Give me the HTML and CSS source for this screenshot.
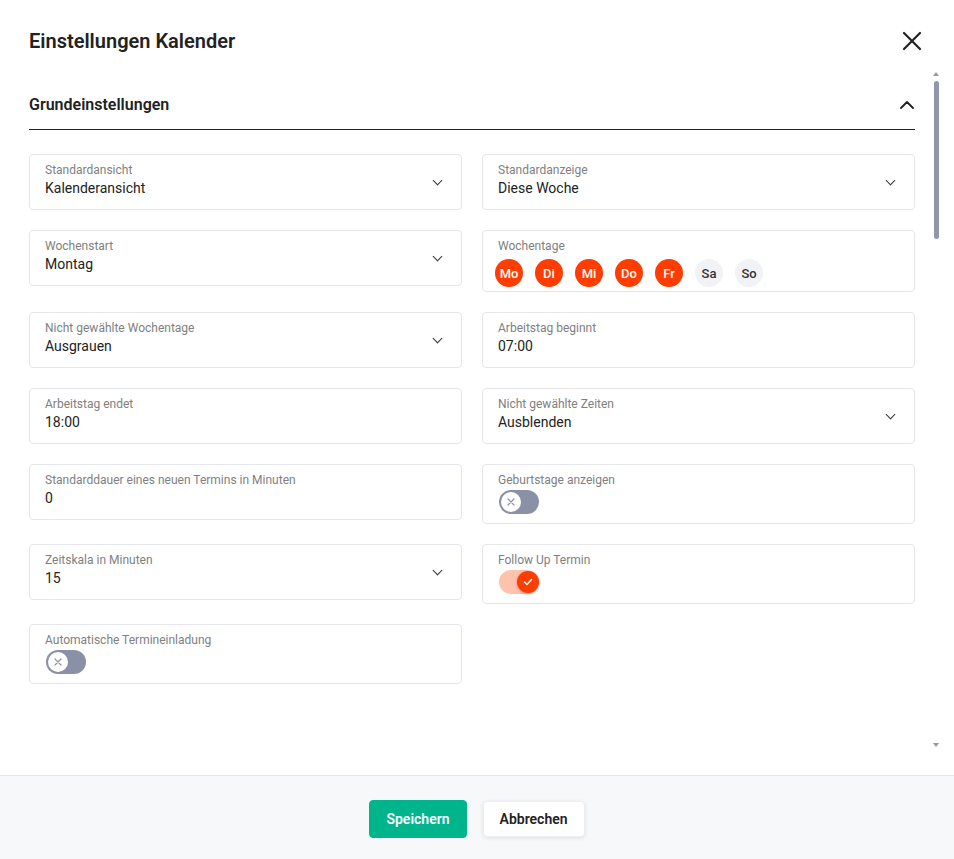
FILE: index.html
```html
<!DOCTYPE html>
<html lang="de">
<head>
  <meta charset="UTF-8">
  <title>Einstellungen Kalender</title>
  <link rel="stylesheet" href="styles.css">
</head>
<body>
  <div class="modal">
    <div class="modal-header">
      <h1>Einstellungen Kalender</h1>
      <button class="close" aria-label="Schließen">
        <svg width="20" height="20" viewBox="0 0 20 20"><path d="M2 2L18 18M18 2L2 18" stroke="#222" stroke-width="2.2" stroke-linecap="round"/></svg>
      </button>
    </div>

    <div class="body-wrap">
      <div class="modal-body">
        <div class="section-head">
          <h2>Grundeinstellungen</h2>
          <svg width="14" height="8" viewBox="0 0 14 8"><path d="M1 7L7 1L13 7" fill="none" stroke="#222" stroke-width="1.8" stroke-linecap="round" stroke-linejoin="round"/></svg>
        </div>

        <div class="form-grid">
          <div class="field select">
            <div class="label">Standardansicht</div>
            <div class="value">Kalenderansicht</div>
          </div>
          <div class="field select">
            <div class="label">Standardanzeige</div>
            <div class="value">Diese Woche</div>
          </div>

          <div class="field select">
            <div class="label">Wochenstart</div>
            <div class="value">Montag</div>
          </div>
          <div class="field">
            <div class="label">Wochentage</div>
            <div class="days">
              <span class="day on">Mo</span>
              <span class="day on">Di</span>
              <span class="day on">Mi</span>
              <span class="day on">Do</span>
              <span class="day on">Fr</span>
              <span class="day">Sa</span>
              <span class="day">So</span>
            </div>
          </div>

          <div class="field select">
            <div class="label">Nicht gewählte Wochentage</div>
            <div class="value">Ausgrauen</div>
          </div>
          <div class="field">
            <div class="label">Arbeitstag beginnt</div>
            <div class="value">07:00</div>
          </div>

          <div class="field">
            <div class="label">Arbeitstag endet</div>
            <div class="value">18:00</div>
          </div>
          <div class="field select">
            <div class="label">Nicht gewählte Zeiten</div>
            <div class="value">Ausblenden</div>
          </div>

          <div class="field">
            <div class="label">Standarddauer eines neuen Termins in Minuten</div>
            <div class="value">0</div>
          </div>
          <div class="field">
            <div class="label">Geburtstage anzeigen</div>
            <div class="toggle">
              <span class="knob">
                <svg width="8" height="8" viewBox="0 0 8 8"><path d="M1 1L7 7M7 1L1 7" stroke="#8a90a6" stroke-width="1.2" stroke-linecap="round"/></svg>
              </span>
            </div>
          </div>

          <div class="field select">
            <div class="label">Zeitskala in Minuten</div>
            <div class="value">15</div>
          </div>
          <div class="field">
            <div class="label">Follow Up Termin</div>
            <div class="toggle checked">
              <span class="knob">
                <svg width="10" height="8" viewBox="0 0 10 8"><path d="M1.5 4L4 6.5L8.5 1.5" fill="none" stroke="#fff" stroke-width="1.6" stroke-linecap="round" stroke-linejoin="round"/></svg>
              </span>
            </div>
          </div>

          <div class="field">
            <div class="label">Automatische Termineinladung</div>
            <div class="toggle">
              <span class="knob">
                <svg width="8" height="8" viewBox="0 0 8 8"><path d="M1 1L7 7M7 1L1 7" stroke="#8a90a6" stroke-width="1.2" stroke-linecap="round"/></svg>
              </span>
            </div>
          </div>
        </div>
      </div>

      <!-- Scrollleiste (feste Darstellung) -->
      <div class="scrollbar">
        <span class="arrow up"></span>
        <span class="thumb"></span>
        <span class="arrow down"></span>
      </div>
    </div>

    <div class="modal-footer">
      <button class="btn primary">Speichern</button>
      <button class="btn">Abbrechen</button>
    </div>
  </div>
</body>
</html>
```

FILE: styles.css
```css
* {
  box-sizing: border-box;
}
body {
  margin: 0;
  font-family: Roboto, "Liberation Sans", sans-serif;
  color: #222;
  background: #fff;
  overflow: hidden;
}
.modal {
  display: flex;
  flex-direction: column;
  height: 100vh;
}
.modal-header {
  height: 70px;
  flex-shrink: 0;
  display: flex;
  align-items: center;
  justify-content: space-between;
  padding: 0 32px 0 29px;
}
.modal-header h1 {
  margin: 0;
  font-size: 20px;
  font-weight: 600;
  padding-top: 12px;
}
.close {
  border: none;
  background: none;
  padding: 0;
  margin-top: 12px;
  cursor: pointer;
  display: flex;
}
.body-wrap {
  position: relative;
  flex: 1;
  min-height: 0;
  display: flex;
}
.modal-body {
  flex: 1;
  overflow-y: auto;
  padding: 10px 39px 0 29px;
}
.scrollbar {
  position: absolute;
  top: 0;
  bottom: 0;
  right: 15px;
  width: 6px;
  display: flex;
  flex-direction: column;
  align-items: center;
}
.arrow {
  width: 0;
  height: 0;
  border-left: 3px solid transparent;
  border-right: 3px solid transparent;
}
.arrow.up {
  margin-top: 2px;
  border-bottom: 4px solid #9197ab;
}
.arrow.down {
  margin-top: auto;
  margin-bottom: 28px;
  border-top: 4px solid #9197ab;
}
.thumb {
  width: 5px;
  height: 158px;
  margin-top: 5px;
  border-radius: 3px;
  background: #9197ab;
}
.section-head {
  height: 50px;
  display: flex;
  align-items: center;
  justify-content: space-between;
  padding-right: 1px;
  border-bottom: 1px solid #222;
}
.section-head h2 {
  margin: 0;
  font-size: 16px;
  font-weight: 600;
}
.form-grid {
  display: grid;
  grid-template-columns: 1fr 1fr;
  column-gap: 20px;
  row-gap: 20px;
  align-items: start;
  margin-top: 24px;
}
.field {
  position: relative;
  border: 1px solid #e4e6eb;
  border-radius: 4px;
  padding: 7px 15px 11px;
}
.field.select::after {
  content: "";
  position: absolute;
  right: 20px;
  top: 50%;
  width: 6px;
  height: 6px;
  margin-top: -5px;
  border-right: 1.5px solid #333;
  border-bottom: 1.5px solid #333;
  transform: rotate(45deg);
}
.label {
  font-size: 12px;
  line-height: 16px;
  color: #808080;
}
.value {
  font-size: 14px;
  line-height: 20px;
}
.days {
  display: flex;
  gap: 12px;
  margin-top: 5px;
  margin-bottom: -7px;
  margin-left: -3px;
}
.day {
  width: 28px;
  height: 28px;
  border-radius: 50%;
  background: #f1f2f5;
  color: #333;
  font-size: 13px;
  font-weight: 500;
  display: flex;
  align-items: center;
  justify-content: center;
}
.day.on {
  background: #ff3d00;
  color: #fff;
}
.toggle {
  width: 40px;
  height: 24px;
  margin: 2px 0 -2px 1px;
  border-radius: 12px;
  background: #8a90a6;
  display: flex;
  align-items: center;
  padding: 0 2px;
}
.knob {
  width: 20px;
  height: 20px;
  border-radius: 50%;
  background: #fff;
  display: flex;
  align-items: center;
  justify-content: center;
}
.toggle.checked {
  background: #ffc2ad;
  justify-content: flex-end;
  padding: 0;
}
.toggle.checked .knob {
  width: 22px;
  height: 22px;
  background: #ff3d00;
  box-shadow: 0 1px 3px rgba(0, 0, 0, 0.25);
}
.modal-footer {
  flex-shrink: 0;
  display: flex;
  justify-content: center;
  align-items: center;
  gap: 16px;
  height: 84px;
  padding-top: 3px;
  border-top: 1px solid #e4e6eb;
  background: #f7f8fa;
}
.btn {
  height: 36px;
  padding: 0 16px;
  font-family: inherit;
  font-size: 14px;
  font-weight: 600;
  color: #222;
  background: #fff;
  border: 1px solid #eceef2;
  border-radius: 4px;
  box-shadow: 0 1px 4px rgba(0, 0, 0, 0.1);
  cursor: pointer;
}
.btn.primary {
  height: 38px;
  padding: 0 16px;
  color: #fff;
  background: #00b48c;
  border-color: #00b48c;
  box-shadow: none;
}
```
